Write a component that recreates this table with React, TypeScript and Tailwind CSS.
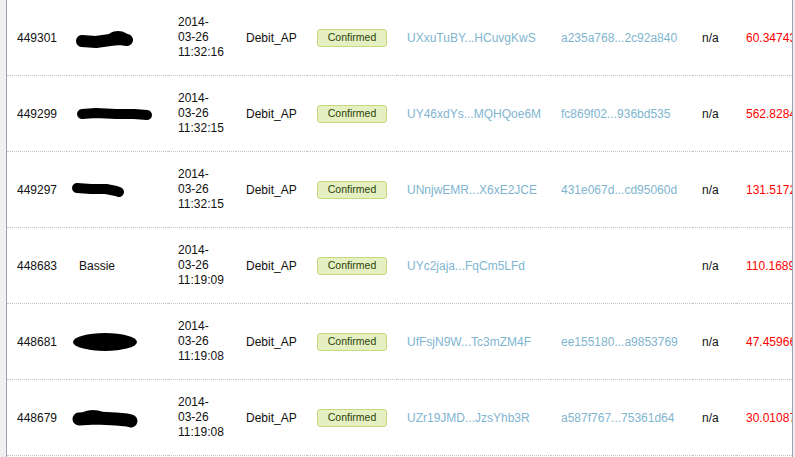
const rows = [
  {
    id: "449301",
    name: null,
    blob: 0,
    date: ["2014-", "03-26", "11:32:16"],
    addr: "UXxuTuBY...HCuvgKwS",
    hash: "a235a768...2c92a840",
    amount: "60.347431",
  },
  {
    id: "449299",
    name: null,
    blob: 1,
    date: ["2014-", "03-26", "11:32:15"],
    addr: "UY46xdYs...MQHQoe6M",
    hash: "fc869f02...936bd535",
    amount: "562.828412",
  },
  {
    id: "449297",
    name: null,
    blob: 2,
    date: ["2014-", "03-26", "11:32:15"],
    addr: "UNnjwEMR...X6xE2JCE",
    hash: "431e067d...cd95060d",
    amount: "131.517209",
  },
  {
    id: "448683",
    name: "Bassie",
    blob: -1,
    date: ["2014-", "03-26", "11:19:09"],
    addr: "UYc2jaja...FqCm5LFd",
    hash: "",
    amount: "110.168943",
  },
  {
    id: "448681",
    name: null,
    blob: 3,
    date: ["2014-", "03-26", "11:19:08"],
    addr: "UfFsjN9W...Tc3mZM4F",
    hash: "ee155180...a9853769",
    amount: "47.459661",
  },
  {
    id: "448679",
    name: null,
    blob: 4,
    date: ["2014-", "03-26", "11:19:08"],
    addr: "UZr19JMD...JzsYhb3R",
    hash: "a587f767...75361d64",
    amount: "30.010872",
  },
];

// marker scribbles over redacted names
function Scribble({ kind }: { kind: number }) {
  if (kind === 0)
    return (
      <svg width="70" height="22" viewBox="0 0 70 22" className="-ml-[5px] mt-[2px]">
        <polyline points="8,13 22,14 36,12 46,11 53,12" fill="none" stroke="#000" strokeWidth="12" strokeLinecap="round" strokeLinejoin="round" />
        <ellipse cx="44" cy="10" rx="11" ry="7" fill="#000" />
      </svg>
    );
  if (kind === 1)
    return (
      <svg width="84" height="22" viewBox="0 0 84 22" className="-ml-[3px]">
        <polyline points="6,11 20,10 40,11 58,11 71,12" fill="none" stroke="#000" strokeWidth="10" strokeLinecap="round" strokeLinejoin="round" />
      </svg>
    );
  if (kind === 2)
    return (
      <svg width="60" height="22" viewBox="0 0 60 22" className="-ml-[8px]">
        <polyline points="6,9 20,10 35,10 45,12 48,13" fill="none" stroke="#000" strokeWidth="10" strokeLinecap="round" strokeLinejoin="round" />
      </svg>
    );
  if (kind === 3)
    return (
      <svg width="70" height="22" viewBox="0 0 70 22" className="-ml-[8px]">
        <ellipse cx="34" cy="11" rx="32" ry="9" fill="#000" />
      </svg>
    );
  return (
    <svg width="70" height="22" viewBox="0 0 70 22" className="-ml-[8px]">
      <polyline points="8,12 25,11 45,12 56,13 60,14" fill="none" stroke="#000" strokeWidth="13" strokeLinecap="round" strokeLinejoin="round" />
      <ellipse cx="22" cy="9" rx="13" ry="6" fill="#000" />
    </svg>
  );
}

const cell = "flex items-center border-b border-dotted border-[#c4c4c4] pl-[10px]";

export default function App() {
  return (
    <div className="w-[795px] h-[457px] bg-[#f1f1f1] pl-[6px] pr-[2px] overflow-hidden font-['Liberation_Sans',Arial,sans-serif] text-[12px] text-[#111]">
      <div className="h-full bg-white border-x border-[#9c9fb5] overflow-hidden">
        <div className="grid grid-cols-[60px_101px_68px_71px_90px_154px_141px_44px_1fr]">
          {rows.map((r) => (
            <div key={r.id} className="contents">
              <div className={`${cell} h-[76px]`}>{r.id}</div>
              <div className={`${cell} pl-[12px]`}>
                {r.name ? r.name : <Scribble kind={r.blob} />}
              </div>
              <div className={`${cell} leading-[15px]`}>
                <div>
                  {r.date.map((d) => (
                    <div key={d}>{d}</div>
                  ))}
                </div>
              </div>
              <div className={cell}>Debit_AP</div>
              <div className={cell}>
                <span className="h-[18px] w-[70px] flex items-center justify-center rounded-[3px] border border-[#c6d880] bg-[#e6efc2] text-[10.5px] text-[#264409]">
                  Confirmed
                </span>
              </div>
              <div className={`${cell} text-[#80b5cf] whitespace-nowrap`}>{r.addr}</div>
              <div className={`${cell} text-[#80b5cf] whitespace-nowrap`}>{r.hash}</div>
              <div className={cell}>n/a</div>
              <div className={`${cell} text-[#ff0000] whitespace-nowrap overflow-hidden`}>{r.amount}</div>
            </div>
          ))}
        </div>
      </div>
    </div>
  );
}
